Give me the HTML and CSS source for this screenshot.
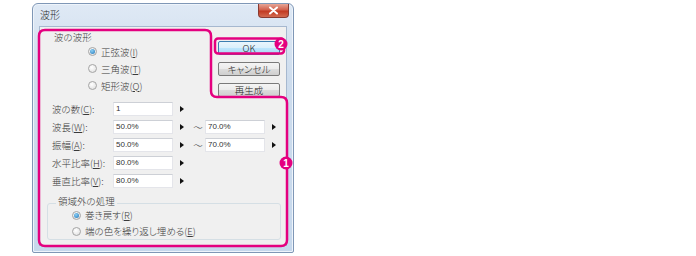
FILE: index.html
```html
<!DOCTYPE html>
<html lang="ja">
<head>
<meta charset="utf-8">
<title>波形</title>
<link rel="stylesheet" href="styles.css">
</head>
<body>
<div class="stage">
  <div class="window">
    <div class="titlebar">
      <span class="title">波形</span>
      <div class="close">
        <svg width="11" height="9" viewBox="0 0 11 9"><path d="M2 1.5 L9 7.5 M9 1.5 L2 7.5" stroke="#fff" stroke-width="2" stroke-linecap="round"/></svg>
      </div>
    </div>
    <div class="client">
      <div class="top">
        <div class="wave">
          <div class="wlabel">波の波形</div>
          <div class="wradio"><span class="rb on"></span>正弦波(<u>I</u>)</div>
          <div class="wradio"><span class="rb"></span>三角波(<u>T</u>)</div>
          <div class="wradio"><span class="rb"></span>矩形波(<u>Q</u>)</div>
        </div>
        <div class="buttons">
          <div class="btn default">OK</div>
          <div class="btn">キャンセル</div>
          <div class="btn">再生成</div>
        </div>
      </div>
      <div class="rows">
        <div class="row"><span class="lbl">波の数(<u>C</u>):</span><span class="inp">1</span><span class="arr"></span></div>
        <div class="row"><span class="lbl">波長(<u>W</u>):</span><span class="inp">50.0%</span><span class="arr"></span><span class="tilde">～</span><span class="inp">70.0%</span><span class="arr"></span></div>
        <div class="row"><span class="lbl">振幅(<u>A</u>):</span><span class="inp">50.0%</span><span class="arr"></span><span class="tilde">～</span><span class="inp">70.0%</span><span class="arr"></span></div>
        <div class="row"><span class="lbl">水平比率(<u>H</u>):</span><span class="inp">80.0%</span><span class="arr"></span></div>
        <div class="row"><span class="lbl">垂直比率(<u>V</u>):</span><span class="inp">80.0%</span><span class="arr"></span></div>
      </div>
      <div class="outside">
        <div class="olabel">領域外の処理</div>
        <div class="oradio"><span class="rb on"></span>巻き戻す(<u>R</u>)</div>
        <div class="oradio"><span class="rb"></span>端の色を繰り返し埋める(<u>E</u>)</div>
      </div>
    </div>
  </div>
  <svg class="annot" width="696" height="256" viewBox="0 0 696 256">
    <path d="M39 36 Q39 30 45 30 L205 30 Q211 30 211 36 L211 91 Q211 97 217 97 L281 97 Q287 97 287 103 L287 240 Q287 246 281 246 L45 246 Q39 246 39 240 Z" fill="none" stroke="#e4007f" stroke-width="2.5"/>
    <rect x="215" y="38.5" width="69" height="15" rx="3" fill="none" stroke="#e4007f" stroke-width="2.5"/>
    <circle cx="281" cy="44" r="6.5" fill="#e4007f"/>
    <text x="281" y="47.5" class="badge">2</text>
    <circle cx="286" cy="163" r="6.5" fill="#e4007f"/>
    <text x="286" y="166.5" class="badge">1</text>
  </svg>
</div>
</body>
</html>
```
FILE: styles.css
```css
* { box-sizing: border-box; }
html, body { margin: 0; padding: 0; background: #fff; }
body {
  font-family: "Noto Sans CJK JP", "Noto Sans", sans-serif;
  font-size: 9.5px;
  font-weight: 300;
  font-feature-settings: "palt";
  color: #3a3a3a;
}
u { text-decoration: underline; text-underline-offset: 1px; text-decoration-thickness: 1px; }

.stage {
  position: relative;
  width: 696px;
  height: 256px;
  padding: 3px 0 0 32px;
}

.window {
  width: 262px;
  height: 250px;
  border: 1px solid #7f97b6;
  border-radius: 6px 6px 2px 2px;
  background: linear-gradient(#dfe9f5, #cddced 30%, #c6d8ec);
  padding: 0 6px 6px 6px;
  display: flex;
  flex-direction: column;
  box-shadow: inset 0 0 0 1px #eef4fb;
}

.titlebar {
  height: 22px;
  display: flex;
  align-items: flex-start;
  justify-content: space-between;
}
.title {
  margin-top: 4px;
  margin-left: 1px;
  line-height: 14px;
  font-size: 10px;
  color: #2a2a2a;
}
.close {
  width: 31px;
  height: 14px;
  margin-right: -2px;
  border: 1px solid #8a3a30;
  border-top: none;
  border-radius: 0 0 4px 4px;
  background: linear-gradient(#e7a596, #d1604c 45%, #c23a22 55%, #d26a50);
  display: flex;
  align-items: center;
  justify-content: center;
}

.client {
  flex: 1;
  background: #f0f0f0;
  border: 1px solid #a6b8cf;
  display: flex;
  flex-direction: column;
}

.top {
  display: flex;
  align-items: flex-start;
}
.wave {
  margin: 4px 0 0 5px;
  width: 163px;
}
.wlabel {
  padding-left: 9px;
  line-height: 12px;
}
.wradio {
  display: flex;
  align-items: center;
  height: 17px;
  padding-left: 43px;
}

.rb {
  width: 9px;
  height: 9px;
  border-radius: 50%;
  border: 1px solid #a5a5a5;
  background: radial-gradient(circle at 40% 35%, #ffffff, #dcdcdc);
  margin-right: 4px;
  display: flex;
  align-items: center;
  justify-content: center;
  flex: none;
}
.rb.on::after {
  content: "";
  width: 5px;
  height: 5px;
  border-radius: 50%;
  background: radial-gradient(circle at 40% 35%, #8cd0f5, #1f74b8);
}

.buttons {
  margin: 14px 0 0 10px;
  display: flex;
  flex-direction: column;
  gap: 7px;
}
.btn {
  width: 62px;
  height: 14px;
  border: 1px solid #7a7a7a;
  border-radius: 2px;
  background: linear-gradient(#f4f4f4, #ebebeb 50%, #dcdcdc 51%, #cfcfcf);
  font-size: 9.5px;
  line-height: 12px;
  text-align: center;
  color: #222;
}
.btn.default {
  border-color: #3c7fb1;
  background: linear-gradient(#eaf6fd, #d9f0fc 50%, #bee6fd 51%, #a7d9f5);
}

.rows {
  margin-top: 5px;
  display: flex;
  flex-direction: column;
}
.row {
  height: 18px;
  display: flex;
  align-items: flex-start;
  padding-left: 12px;
}
.lbl {
  width: 61px;
  line-height: 14px;
}
.inp {
  width: 60px;
  height: 14px;
  background: #fff;
  border: 1px solid #e4e5ea;
  border-top-color: #cdd0d6;
  font-family: "Liberation Sans", sans-serif;
  font-size: 8px;
  line-height: 12px;
  padding-left: 2px;
  color: #333;
}
.arr {
  width: 0;
  height: 0;
  margin: 4px 0 0 7px;
  border-left: 4px solid #111;
  border-top: 3px solid transparent;
  border-bottom: 3px solid transparent;
}
.tilde {
  width: 10px;
  margin-left: 9px;
  margin-right: 2px;
  line-height: 14px;
  font-size: 9.5px;
  text-align: center;
  font-feature-settings: normal;
}

.outside {
  margin: 11px 5px 0 7px;
  border: 1px solid #d5dfe5;
  border-radius: 3px;
  height: 37px;
}
.olabel {
  width: fit-content;
  margin: -9px 0 0 8px;
  padding: 0 2px;
  background: #f0f0f0;
  line-height: 12px;
}
.oradio {
  display: flex;
  align-items: center;
  height: 16px;
  padding-left: 24px;
}

.annot {
  position: absolute;
  left: 0;
  top: 0;
  pointer-events: none;
}
.badge {
  fill: #fff;
  font-family: "Liberation Sans", sans-serif;
  font-weight: bold;
  font-size: 10px;
  text-anchor: middle;
}
```
